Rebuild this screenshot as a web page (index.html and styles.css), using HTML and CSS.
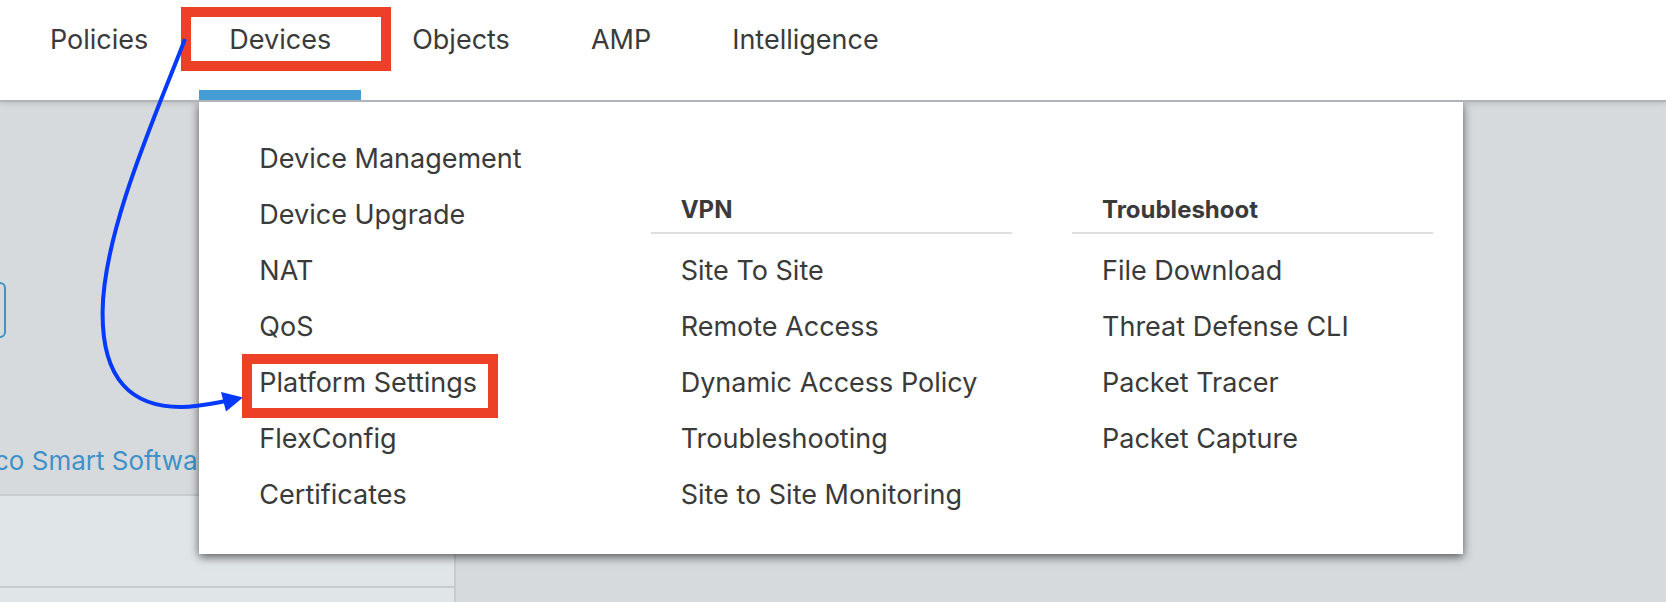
FILE: index.html
```html
<!DOCTYPE html>
<html lang="en">
<head>
<meta charset="utf-8">
<title>Devices</title>
<link rel="stylesheet" href="styles.css">
</head>
<body>
<header class="header">
  <nav class="nav" aria-label="Main">
    <ul class="nav-list">
      <li class="nav-item"><a class="nav-link" href="#">Policies</a></li>
      <li class="nav-item">
        <a class="nav-link nav-link-active" href="#">Devices<span class="mark mark-nav"></span></a>
        <div class="menu">
          <ul class="menu-list">
            <li><a class="menu-link" href="#">Device Management</a></li>
            <li><a class="menu-link" href="#">Device Upgrade</a></li>
            <li><a class="menu-link" href="#">NAT</a></li>
            <li><a class="menu-link" href="#">QoS</a></li>
            <li><a class="menu-link" href="#">Platform Settings<span class="mark mark-menu"></span></a></li>
            <li><a class="menu-link" href="#">FlexConfig</a></li>
            <li><a class="menu-link" href="#">Certificates</a></li>
          </ul>
          <section class="menu-group">
            <h2 class="menu-title">VPN</h2>
            <ul class="menu-list">
              <li><a class="menu-link" href="#">Site To Site</a></li>
              <li><a class="menu-link" href="#">Remote Access</a></li>
              <li><a class="menu-link" href="#">Dynamic Access Policy</a></li>
              <li><a class="menu-link" href="#">Troubleshooting</a></li>
              <li><a class="menu-link" href="#">Site to Site Monitoring</a></li>
            </ul>
          </section>
          <section class="menu-group">
            <h2 class="menu-title">Troubleshoot</h2>
            <ul class="menu-list">
              <li><a class="menu-link" href="#">File Download</a></li>
              <li><a class="menu-link" href="#">Threat Defense CLI</a></li>
              <li><a class="menu-link" href="#">Packet Tracer</a></li>
              <li><a class="menu-link" href="#">Packet Capture</a></li>
            </ul>
          </section>
        </div>
      </li>
      <li class="nav-item"><a class="nav-link" href="#">Objects</a></li>
      <li class="nav-item"><a class="nav-link" href="#">AMP</a></li>
      <li class="nav-item"><a class="nav-link" href="#">Intelligence</a></li>
    </ul>
  </nav>
</header>
<main class="page">
  <button class="action" type="button" aria-label="Action"></button>
  <a class="page-link" href="#">co Smart Software</a>
  <div class="panel">
    <div class="panel-row"></div>
  </div>
</main>
<svg class="arrow" width="260" height="430" viewBox="0 0 260 430" aria-hidden="true">
  <path d="M185 39C160 105 103 230 102.600 312C102 380 132 407 181 407C197 407 210 404 226 401" fill="none" stroke="#0539fb" stroke-width="4"/>
  <path d="M221 392L243 397.500L226 411.500Z" fill="#0539fb"/>
</svg>
</body>
</html>
```
FILE: styles.css
```css
* {
  box-sizing: border-box;
}

body {
  margin: 0;
  min-height: 100vh;
  display: flex;
  flex-direction: column;
  position: relative;
  background: #d6dadd;
  color: #3a3a3b;
  font-family: Inter, "Liberation Sans", sans-serif;
  font-size: 27px;
  line-height: 36px;
}

ul {
  list-style: none;
  margin: 0;
  padding: 0;
}

a {
  color: inherit;
  text-decoration: none;
}

.header {
  position: relative;
  z-index: 1;
  background: #fff;
  border-bottom: 2px solid #b0b4b8;
  box-shadow: 0 1px 6px rgba(0, 0, 0, 0.15);
}

.nav {
  padding-left: 20px;
}

.nav-list {
  display: flex;
  gap: 21px;
}

.nav-item {
  position: relative;
}

.nav-link {
  display: block;
  position: relative;
  height: 100px;
  padding: 22px 30px 0;
}

.nav-link-active {
  border-bottom: 10px solid #459dd3;
}

.menu {
  position: absolute;
  top: 102px;
  left: 0;
  width: calc(100vw - 402px);
  padding: 29px 30px 31px;
  display: grid;
  grid-template-columns: repeat(3, 1fr);
  column-gap: 60px;
  background: #fff;
  box-shadow: 0 3px 9px rgba(0, 0, 0, 0.6);
  clip-path: inset(0 -20px -20px -20px);
}

.menu-group {
  padding-top: 54px;
}

.menu-title {
  margin: 0 0 9px;
  padding: 7px 30px 4px;
  border-bottom: 2px solid #dfdfdf;
  font-size: 24px;
  font-weight: 700;
  line-height: 36px;
}

.menu-link {
  display: block;
  position: relative;
  width: fit-content;
  margin-left: 30px;
  line-height: 56px;
  white-space: nowrap;
}

.mark {
  position: absolute;
  border: 10px solid #ec4126;
}

.mark-nav {
  top: 7px;
  left: -18px;
  right: -30px;
  height: 64px;
}

.mark-menu {
  top: -1px;
  left: -17px;
  right: -21px;
  height: 64px;
}

.page {
  flex: 1;
  display: flex;
  flex-direction: column;
  align-items: flex-start;
  overflow: hidden;
}

.action {
  width: 60px;
  height: 56px;
  margin: 180px 0 0 -54px;
  background: transparent;
  border: 2px solid #3f92c6;
  border-radius: 6px;
}

.page-link {
  margin: 105px 0 15px -6px;
  color: #3f92c6;
  font-size: 26px;
}

.panel {
  flex: 1;
  width: 456px;
  border-top: 2px solid #c7cccf;
  border-right: 2px solid #c7cccf;
  background: #e0e5e8;
}

.panel-row {
  height: 92px;
  border-bottom: 2px solid #c7cccf;
}

.arrow {
  position: absolute;
  top: 0;
  left: 0;
  z-index: 2;
  pointer-events: none;
}
```
